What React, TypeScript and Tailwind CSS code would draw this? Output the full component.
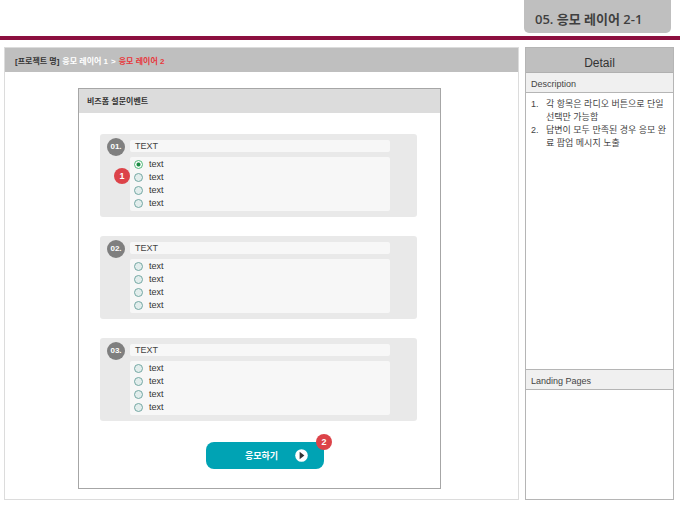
import React from "react";

const questions = [
  { no: "01.", title: "TEXT", options: ["text", "text", "text", "text"], checked: 0, badge: "1" },
  { no: "02.", title: "TEXT", options: ["text", "text", "text", "text"] },
  { no: "03.", title: "TEXT", options: ["text", "text", "text", "text"] },
];

type Question = {
  no: string;
  title: string;
  options: string[];
  checked?: number;
  badge?: string;
};

const Badge = ({ children, className }: { children: React.ReactNode; className: string }) => (
  <span
    className={`absolute flex size-4 items-center justify-center rounded-full bg-[#dc4349] text-[9px] leading-none font-bold text-white ${className}`}
  >
    {children}
  </span>
);

const QuestionCard = ({ question }: { question: Question }) => {
  return (
    <section className="relative flex gap-[5px] rounded-[3px] bg-[#e9e9e9] pt-[6px] pr-[27px] pb-[6px] pl-[7px]">
      <span className="-mt-[2px] flex size-[18px] shrink-0 items-center justify-center rounded-full bg-[#7f7f7f] text-[8px] leading-none font-bold text-white">
        {question.no}
      </span>
      <fieldset className="flex min-w-0 flex-1 flex-col">
        <legend className="mb-[5px] h-[12px] w-full rounded-xs bg-[#f7f7f7] pl-[5px] text-[9px] leading-[12px] text-[#444]">
          {question.title}
        </legend>
        <div className="rounded-xs bg-[#f7f7f7] py-px pl-1">
          {question.options.map((option, index) => (
            <label
              key={index}
              className="flex h-[13px] items-center gap-[6px] text-[9px] leading-[13px] text-[#333]"
            >
              <input
                type="radio"
                name={`question-${question.no}`}
                defaultChecked={question.checked === index}
                className="size-[9px] appearance-none rounded-full border border-[#74a8a4] bg-[#e2edec] checked:border-[#4fb878] checked:bg-white checked:bg-[radial-gradient(circle,#1c8a44_1.5px,transparent_2.5px)]"
              />
              {option}
            </label>
          ))}
        </div>
      </fieldset>
      {question.badge && <Badge className="top-[34px] left-[14px]">{question.badge}</Badge>}
    </section>
  );
};

export default function App() {
  return (
    <div className="flex min-h-screen flex-col bg-white pb-[10px] font-['Liberation_Sans','Noto_Sans_CJK_KR',sans-serif] text-[#444]">
      <header className="flex justify-end border-b-4 border-[#8c0f3f] pr-[9px] pb-[3px]">
        <h1 className="flex h-[33px] w-[147px] items-center rounded-b-[5px] bg-[#bfbfbf] pt-1 pl-[11px] font-['Open_Sans','Noto_Sans_CJK_KR',sans-serif] text-[13px] leading-4 font-semibold whitespace-nowrap text-[#3f3f3f]">
          05. 응모 레이어 2-1
        </h1>
      </header>

      <div className="flex flex-1 gap-[6px] pt-[7px] pr-[6px] pl-1">
        <main className="min-w-0 flex-1 border border-[#dcdcdc] pb-[10px]">
          <nav className="flex h-6 items-center gap-[3px] bg-[#bfbfbf] pt-[3px] pl-[10px] text-[8px] leading-3 font-bold whitespace-nowrap">
            <span className="text-[#333]">[프로젝트 명]</span>
            <a href="#layer-1" className="text-white">
              응모 레이어 1
            </a>
            <span className="text-white">&gt;</span>
            <a href="#layer-2" className="text-[#e8363b]">
              응모 레이어 2
            </a>
          </nav>

          <form className="mt-4 mr-[77px] ml-[73px] border border-[#a6a6a6] pb-[19px]">
            <h2 className="flex h-6 items-center bg-[#dcdcdc] pt-[2px] pl-2 text-[8px] leading-3 font-bold text-[#333]">
              비즈폼 설문이벤트
            </h2>
            <div className="mt-[21px] mr-[23px] ml-[21px] flex flex-col gap-[19px]">
              {questions.map((question) => (
                <QuestionCard key={question.no} question={question} />
              ))}
            </div>
            <div className="mt-[21px] flex justify-center pl-[11px]">
              <button
                type="button"
                className="relative flex h-[27px] w-[118px] items-center rounded-lg bg-[#00a3b4] pr-4 text-[9px] leading-3 font-bold text-white"
              >
                <span className="flex-1 pl-[22px]">응모하기</span>
                <svg viewBox="0 0 13 13" className="size-[13px]" aria-hidden="true">
                  <circle cx="6.5" cy="6.5" r="6.3" fill="#fff" />
                  <path d="M4.6 2.8v7.4l4.8-3.7z" fill="#333" />
                </svg>
                <Badge className="-top-2 -right-2">2</Badge>
              </button>
            </div>
          </form>
        </main>

        <aside className="flex w-[149px] flex-col border border-[#b5b5b5] text-[9px]">
          <h2 className="flex h-[25px] items-center justify-center border-b border-[#b0b0b0] bg-[#bfbfbf] pt-[5px] text-[12px] leading-4 text-[#333]">
            Detail
          </h2>
          <h3 className="flex h-[20px] items-center border-b border-[#b5b5b5] bg-[#f0f0f0] pt-[2px] pl-[5px] leading-3">
            Description
          </h3>
          <ol className="flex-1 list-none pt-[5px] pr-1 pl-[5px] leading-[13px] break-all">
            <li className="flex">
              <span className="w-[15px] shrink-0">1.</span>
              <span>각 항목은 라디오 버튼으로 단일 선택만 가능함</span>
            </li>
            <li className="flex">
              <span className="w-[15px] shrink-0">2.</span>
              <span>답변이 모두 만족된 경우 응모 완료 팝업 메시지 노출</span>
            </li>
          </ol>
          <h3 className="flex h-[21px] items-center border-y border-[#b5b5b5] bg-[#f0f0f0] pt-[2px] pl-[5px] leading-3">
            Landing Pages
          </h3>
          <div className="min-h-[109px]" />
        </aside>
      </div>
    </div>
  );
}
